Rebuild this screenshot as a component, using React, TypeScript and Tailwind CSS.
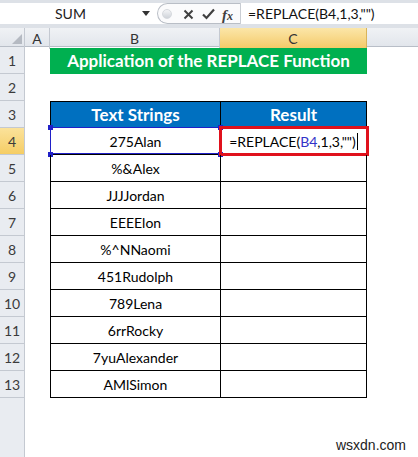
import React from "react";

const data = [
  "275Alan",
  "%&Alex",
  "JJJJordan",
  "EEEElon",
  "%^NNaomi",
  "451Rudolph",
  "789Lena",
  "6rrRocky",
  "7yuAlexander",
  "AMlSimon",
];

const font = { fontFamily: "Lato, 'Open Sans', sans-serif" };

function RowHead({ n, active }: { n?: number; active?: boolean }) {
  return (
    <div
      className={
        "flex h-[27px] items-center justify-center border-b border-r border-[#c4c9d1] text-[14px] text-[#3b3b3b] " +
        (active ? "bg-gradient-to-b from-[#fbe29a] to-[#f5cd64]" : "bg-[#e9ecf1]")
      }
    >
      {n}
    </div>
  );
}

export default function App() {
  return (
    <div className="h-[457px] w-[418px] overflow-hidden bg-white" style={font}>
      {/* Formula bar */}
      <div className="flex h-[28px] flex-col bg-[#dde1e7]">
        <div className="mt-[3px] flex h-[21px] bg-white">
          <div className="relative flex w-[157px] items-center">
            <span className="ml-[55px] text-[14px] text-[#222]">SUM</span>
            <svg className="absolute left-[142px] top-[8px]" width="8" height="5" viewBox="0 0 8 5">
              <path d="M0 0 L8 0 L4 5 Z" fill="#333" />
            </svg>
          </div>
          <div className="relative flex w-[83px] items-center rounded-l-[11px] border border-r-0 border-[#b9bec6] bg-[#fbfbfc]">
            <div className="absolute left-[4px] top-[5px] h-[10px] w-[10px] rounded-full border border-[#d6d9de] bg-gradient-to-b from-[#f4f5f7] to-[#cfd3d9]" />
            <svg className="absolute left-[25px] top-[5px]" width="11" height="11" viewBox="0 0 11 11">
              <path d="M1.5 1.5 L9.5 9.5 M9.5 1.5 L1.5 9.5" stroke="#404040" strokeWidth="2" />
            </svg>
            <svg className="absolute left-[44px] top-[4px]" width="13" height="12" viewBox="0 0 13 12">
              <path d="M1 6.5 L4.5 10 L12 1.5" stroke="#404040" strokeWidth="2.2" fill="none" />
            </svg>
            <span
              className="absolute left-[64px] top-[0px] text-[15px] font-bold italic text-[#404040]"
              style={{ fontFamily: "'Liberation Serif', serif" }}
            >
              f<span className="text-[12px]">x</span>
            </span>
          </div>
          <div className="flex flex-1 items-center border-l border-[#c9cdd3] pl-[7px] text-[14px] text-[#111]">
            =REPLACE(B4,1,3,"")
          </div>
        </div>
        <div className="h-[4px]" />
      </div>

      {/* Column headers */}
      <div className="grid h-[19px] grid-cols-[25px_25px_170px_147px_1fr] border-b border-[#b8bec7] bg-gradient-to-b from-[#f0f2f5] to-[#e2e6ec] text-[14px] text-[#333]">
        <div className="relative border-r border-[#c4c9d1]">
          <svg className="absolute left-[12px] top-[6px]" width="10" height="10" viewBox="0 0 10 10">
            <path d="M10 0 L10 10 L0 10 Z" fill="#b5bac2" />
          </svg>
        </div>
        <div className="flex items-center justify-center border-r border-[#c4c9d1]">A</div>
        <div className="flex items-center justify-center border-r border-[#c4c9d1]">B</div>
        <div className="flex items-center justify-center border-r border-[#d9b45a] bg-gradient-to-b from-[#fbe6a8] to-[#f4c965]">C</div>
        <div />
      </div>

      {/* Body */}
      <div className="flex">
        <div className="flex w-[25px] flex-col bg-[#e9ecf1]">
          {Array.from({ length: 13 }, (_, i) => (
            <RowHead key={i} n={i + 1} active={i === 3} />
          ))}
          <div className="h-[80px] border-r border-[#c4c9d1] bg-[#e9ecf1]" />
        </div>
        <div className="flex flex-1 flex-col">
          {/* row 1 */}
          <div className="flex h-[27px]">
            <div className="w-[25px]" />
            <div className="mt-[1px] flex w-[317px] items-center justify-center bg-[#00b050] text-[17px] font-bold text-white">
              Application of the REPLACE Function
            </div>
          </div>
          {/* row 2 */}
          <div className="h-[27px]" />
          {/* row 3 header */}
          <div className="flex h-[27px]">
            <div className="w-[25px]" />
            <div className="flex w-[170px] items-center justify-center border-b border-l border-t border-black bg-[#0070c0] text-[17px] font-bold text-white">
              Text Strings
            </div>
            <div className="flex w-[147px] items-center justify-center border border-black bg-[#0070c0] text-[17px] font-bold text-white">
              Result
            </div>
          </div>
          {data.map((d, i) => (
            <div key={d} className="flex h-[27px]">
              <div className="w-[25px]" />
              <div className="relative flex w-[170px] items-center justify-center border-b border-l border-black text-[14px] text-black">
                {d}
                {i === 0 && (
                  <>
                    <div className="absolute -left-[1px] -top-[1px] h-[27px] w-[170px] border border-[#2020c8]" />
                    <div className="absolute -left-[3px] -top-[3px] h-[5px] w-[5px] bg-[#2020c8]" />
                    <div className="absolute -right-[3px] -top-[3px] h-[5px] w-[5px] bg-[#2020c8]" />
                    <div className="absolute -bottom-[3px] -left-[3px] h-[5px] w-[5px] bg-[#2020c8]" />
                    <div className="absolute -bottom-[3px] -right-[3px] h-[5px] w-[5px] bg-[#2020c8]" />
                  </>
                )}
              </div>
              <div className="relative flex w-[147px] items-center justify-center border-b border-l border-r border-black text-[14px] text-black">
                {i === 0 && (
                  <>
                    <span>
                      =REPLACE(<span className="text-[#3232c8]">B4</span>,1,3,"")
                    </span>
                    <span className="ml-[1px] h-[17px] w-[1px] bg-black" />
                    <div className="absolute -left-[2px] -top-[2px] h-[30px] w-[150px] border-[3px] border-[#e0111c]" />
                  </>
                )}
              </div>
            </div>
          ))}
          <div className="relative flex-1">
            <span
              className="absolute right-[12px] top-[39px] text-[14px] leading-[16px] text-[#222]"
              style={{ fontFamily: "'Liberation Sans', Arial, sans-serif" }}
            >
              wsxdn.com
            </span>
          </div>
        </div>
      </div>
    </div>
  );
}
